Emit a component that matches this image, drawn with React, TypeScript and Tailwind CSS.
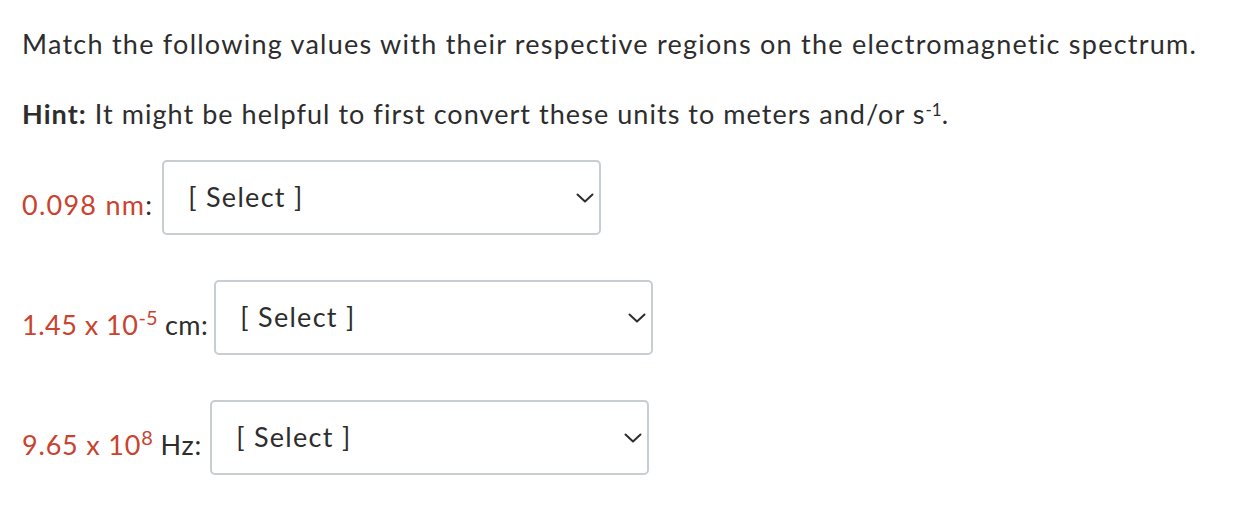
import React from "react";

function Chevron() {
  return (
    <svg width="18" height="10" viewBox="0 0 18 10" fill="none" className="shrink-0">
      <path d="M1.5 1.5 L9 8.5 L16.5 1.5" stroke="#2d2d2d" strokeWidth="2" strokeLinecap="round" strokeLinejoin="round" />
    </svg>
  );
}

function SelectBox() {
  return (
    <div className="flex h-[75px] w-[439px] items-center justify-between rounded-[5px] border-2 border-[#c8cdd1] bg-white pl-[24px] pr-[5px]">
      <span className="-mt-[2px] text-[27px] tracking-[1.3px] text-[#2d2d2d]">[ Select ]</span>
      <Chevron />
    </div>
  );
}

export default function App() {
  return (
    <div
      className="bg-white pl-[22px] pt-[24px] text-[27px] leading-[40px] tracking-[1.25px] text-[#2d2d2d]"
      style={{ fontFamily: "Lato, 'Open Sans', sans-serif" }}
    >
      <p>Match the following values with their respective regions on the electromagnetic spectrum.</p>
      <p className="mt-[30px] tracking-[1.05px]">
        <b>Hint:</b> It might be helpful to first convert these units to meters and/or s<sup className="text-[17px] tracking-normal">-1</sup>.
      </p>
      <div className="mt-[26px] flex flex-col gap-[45px]">
        <div className="flex items-center">
          <span className="mr-[9px] mt-[14px]"><span className="text-[#c9432f]">0.098 nm</span>:</span>
          <SelectBox />
        </div>
        <div className="flex items-center">
          <span className="mr-[6px] mt-[14px] tracking-[0.5px]"><span className="text-[#c9432f]">1.45 x 10<sup className="-top-[10px] text-[20px] tracking-normal">-5</sup></span> cm:</span>
          <SelectBox />
        </div>
        <div className="flex items-center">
          <span className="mr-[8px] mt-[14px] tracking-[0.8px]"><span className="text-[#c9432f]">9.65 x 10<sup className="-top-[10px] text-[20px] tracking-normal">8</sup></span> Hz:</span>
          <SelectBox />
        </div>
      </div>
    </div>
  );
}
